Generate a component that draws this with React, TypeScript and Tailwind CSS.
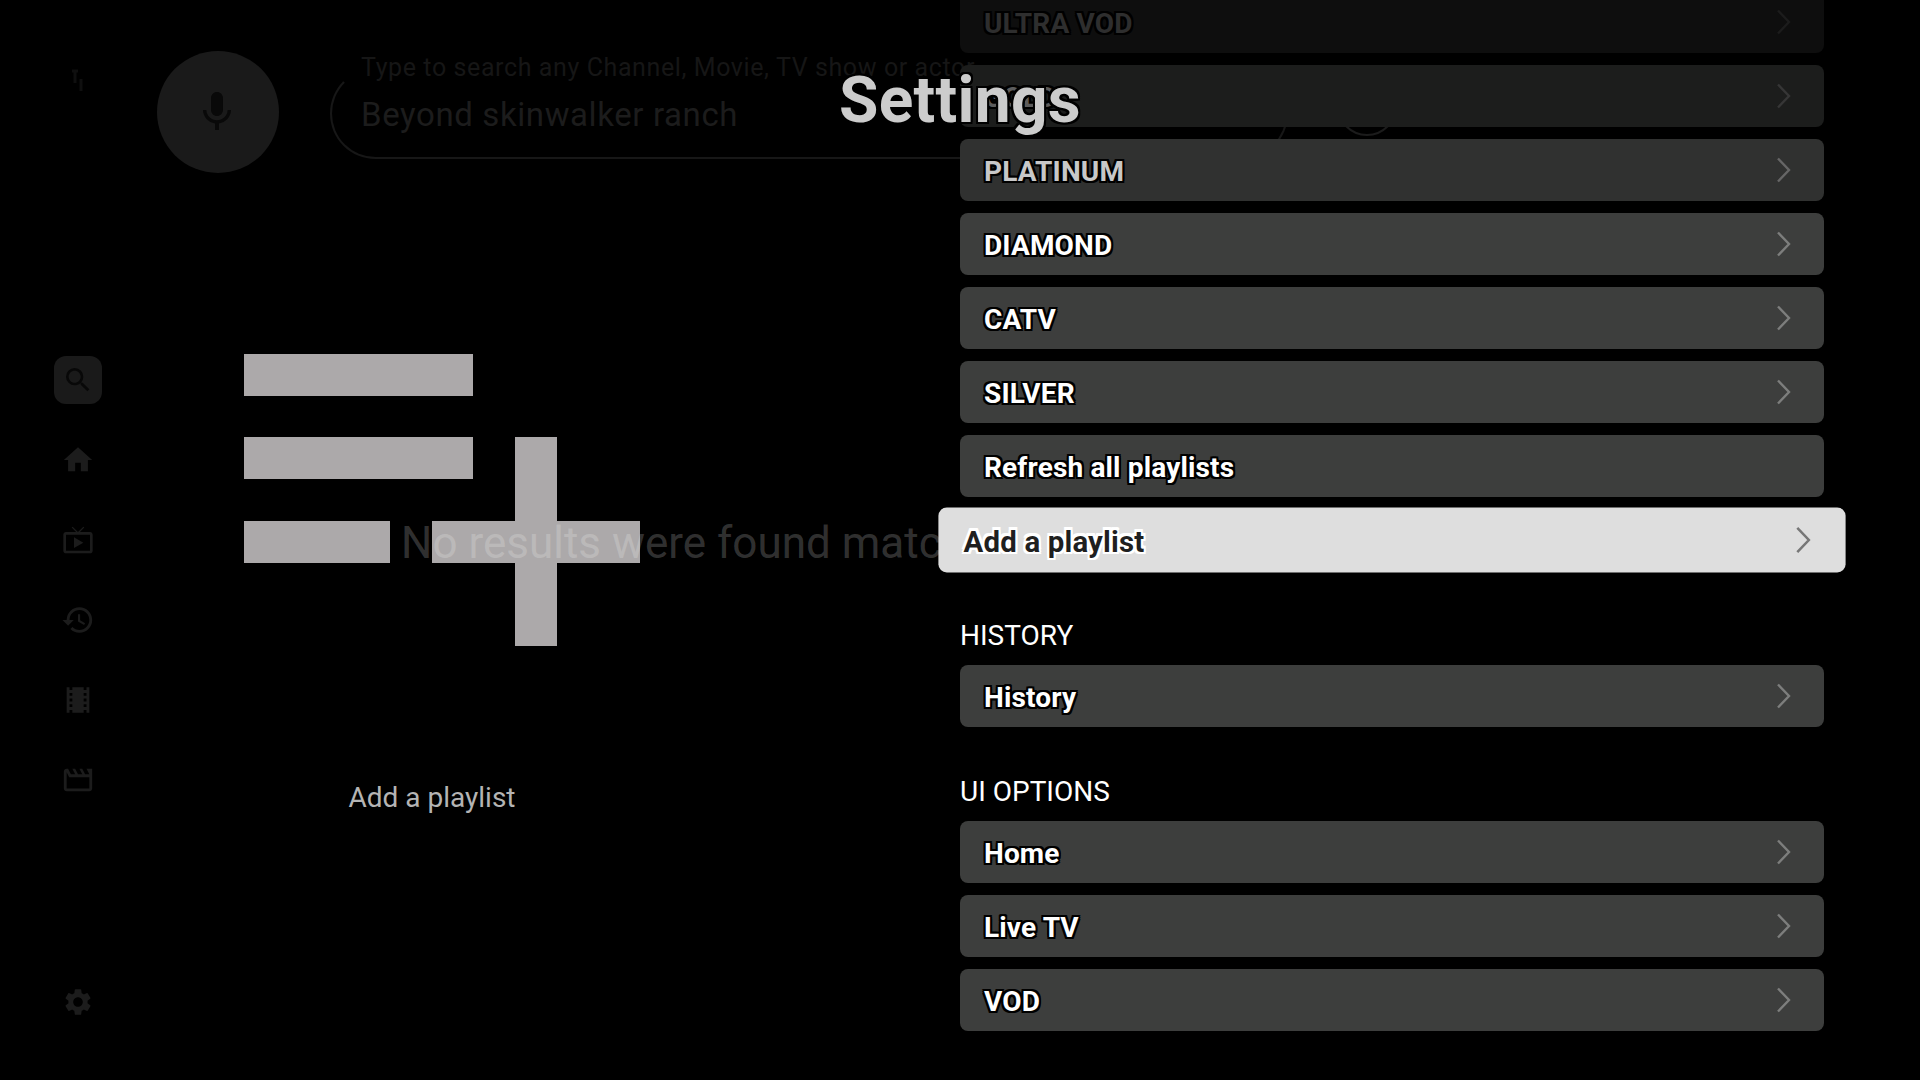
import {
  MdHistory,
  MdHome,
  MdLocalMovies,
  MdMic,
  MdOutlineLiveTv,
  MdOutlineMovie,
  MdSearch,
  MdSettings,
} from "react-icons/md";

const OUTLINE_DARK =
  "[text-shadow:-2px_-2px_0_#000,2px_-2px_0_#000,-2px_2px_0_#000,2px_2px_0_#000,0_-2px_0_#000,0_2px_0_#000,-2px_0_0_#000,2px_0_0_#000]";
const OUTLINE_LIGHT =
  "[text-shadow:-2px_-2px_0_#fff,2px_-2px_0_#fff,-2px_2px_0_#fff,2px_2px_0_#fff,0_-2px_0_#fff,0_2px_0_#fff,-2px_0_0_#fff,2px_0_0_#fff]";

const NAV_ICONS = [MdHome, MdOutlineLiveTv, MdHistory, MdLocalMovies, MdOutlineMovie];

function Chevron({ color }: { color: string }) {
  return (
    <svg width="15" height="26" viewBox="0 0 15 26" fill="none" className={color}>
      <path d="M2 1.5 L13 13 L2 24.5" stroke="currentColor" strokeWidth="2.4" />
    </svg>
  );
}

function Row({
  label,
  bg = "bg-[#3d3e3d]",
  text = "text-white",
  arrow = "text-[#7d7e7d]",
  hasArrow = true,
}: {
  label: string;
  bg?: string;
  text?: string;
  arrow?: string;
  hasArrow?: boolean;
}) {
  return (
    <div className={`flex h-[62px] shrink-0 items-center justify-between rounded-lg pl-6 pr-[33px] ${bg}`}>
      <span className={`pt-1 text-[28px] font-bold tracking-[0.15px] ${text} ${OUTLINE_DARK}`}>{label}</span>
      {hasArrow && <Chevron color={arrow} />}
    </div>
  );
}

function SectionLabel({ text }: { text: string }) {
  return (
    <div className="mb-[1px] mt-[36px] h-[33px] text-[28px] leading-[33px] text-white">{text}</div>
  );
}

export default function App() {
  return (
    <div className="relative flex h-screen w-screen overflow-hidden bg-black font-['Roboto',sans-serif]">
      {/* left nav, very dim behind the settings dialog */}
      <aside className="flex h-full w-[156px] shrink-0 flex-col items-center text-[#1c1c1c]">
        <svg width="16" height="24" viewBox="0 0 16 24" className="mb-[247px] mt-[69px]">
          <path d="M2 2h6M5 2v12M11 10v12" stroke="#0f0f0f" strokeWidth="3" fill="none" />
        </svg>
        <div className="flex h-20 items-center">
          <div className="flex h-12 w-12 items-center justify-center rounded-xl bg-[#1a1a1a]">
            <MdSearch size={32} className="text-[#080808]" />
          </div>
        </div>
        {NAV_ICONS.map((Icon, i) => (
          <div key={i} className="flex h-20 items-center">
            <Icon size={i === 1 ? 32 : 34} />
          </div>
        ))}
        <MdSettings size={32} className="mb-[62px] mt-auto" />
      </aside>

      <main className="flex flex-1 flex-col">
        <header className="flex items-start pl-px pt-[51px]">
          <div className="flex h-[122px] w-[122px] items-center justify-center rounded-full bg-[#1a1a1a] pr-[2px]">
            <MdMic size={48} className="text-[#090909]" />
          </div>
          <div className="relative ml-[51px] mt-[17px] h-[91px] w-[958px] rounded-[46px] border-2 border-[#171717] border-t-transparent">
            <span className="absolute left-[29px] top-[-19px] whitespace-nowrap text-[25px] leading-[34px] tracking-[0.6px] text-[#161616]">
              Type to search any Channel, Movie, TV show or actor
            </span>
            <span className="absolute left-[29px] top-[25px] text-[33px] leading-[40px] tracking-[0.6px] text-[#1c1c1c]">
              Beyond skinwalker ranch
            </span>
          </div>
          <div className="ml-[49px] mt-[25px] h-[60px] w-[60px] rounded-full border-2 border-[#1c1c1c]" />
        </header>

        <section className="relative ml-[88px] mt-[181px] w-[376px]">
          <svg width="396" height="292" viewBox="0 0 396 292" className="block">
            <path
              d="M0 0h229v42H0zM0 83h229v42H0zM0 167h146v42H0zM188 167h83V83h42v84h83v42h-83v83h-42v-83h-83z"
              fill="#aca9aa"
            />
          </svg>
          <span className="absolute left-[157px] top-[161px] whitespace-nowrap text-[44px] leading-[56px] text-white/20">
            No results were found matching
          </span>
          <div className="mt-[135px] text-center text-[28px] leading-[33px] text-[#b4b4b4]">
            Add a playlist
          </div>
        </section>
      </main>

      {/* settings dialog, the list runs off the top of the page */}
      <div className="absolute left-[960px] top-[-9px] flex w-[864px] flex-col gap-3">
        <Row label="ULTRA VOD" bg="bg-[#0e0e0e]" text="text-[#2e2e2e]" arrow="text-[#1c1c1c]" />
        <Row label="GOLD" bg="bg-[#1c1d1c]" text="text-[#5c5c5c]" arrow="text-[#363636]" />
        <Row label="PLATINUM" bg="bg-[#303130]" text="text-[#c8c8c8]" arrow="text-[#666666]" />
        <Row label="DIAMOND" />
        <Row label="CATV" />
        <Row label="SILVER" />
        <Row label="Refresh all playlists" hasArrow={false} />
        <div className="flex h-[62px] shrink-0 scale-105 items-center justify-between rounded-lg bg-[#dedede] pl-6 pr-[33px]">
          <span className={`pt-1 text-[28px] font-bold tracking-[0.15px] text-[#1f1f1f] ${OUTLINE_LIGHT}`}>
            Add a playlist
          </span>
          <Chevron color="text-[#777777]" />
        </div>
        <SectionLabel text="HISTORY" />
        <Row label="History" />
        <SectionLabel text="UI OPTIONS" />
        <Row label="Home" />
        <Row label="Live TV" />
        <Row label="VOD" />
      </div>

      <h1
        className={`absolute left-0 top-[63px] w-full text-center text-[64px] font-bold leading-[76px] tracking-[0.3px] text-[#cccccc] ${OUTLINE_DARK}`}
      >
        Settings
      </h1>
    </div>
  );
}
